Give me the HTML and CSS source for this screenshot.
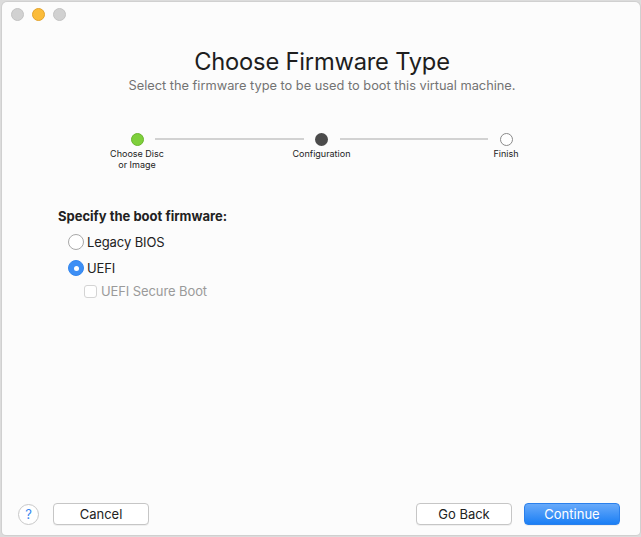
FILE: index.html
```html
<!DOCTYPE html>
<html>
<head>
<meta charset="utf-8">
<link rel="stylesheet" href="styles.css">
</head>
<body>
<div class="window">
  <div class="titlebar">
    <span class="light gray"></span>
    <span class="light yellow"></span>
    <span class="light gray"></span>
  </div>
  <div class="header">
    <h1 class="title">Choose Firmware Type</h1>
    <p class="subtitle">Select the firmware type to be used to boot this virtual machine.</p>
  </div>
  <div class="stepper">
    <div class="step">
      <span class="dot done"></span>
      <span class="step-label">Choose Disc<br>or Image</span>
    </div>
    <div class="line"></div>
    <div class="step">
      <span class="dot current"></span>
      <span class="step-label">Configuration</span>
    </div>
    <div class="line"></div>
    <div class="step">
      <span class="dot todo"></span>
      <span class="step-label">Finish</span>
    </div>
  </div>
  <div class="form">
    <div class="form-title">Specify the boot firmware:</div>
    <label class="option">
      <span class="radio"></span>
      <span class="opt-text">Legacy BIOS</span>
    </label>
    <label class="option">
      <span class="radio checked"></span>
      <span class="opt-text">UEFI</span>
    </label>
    <label class="option sub disabled">
      <span class="checkbox"></span>
      <span class="opt-text">UEFI Secure Boot</span>
    </label>
  </div>
  <div class="footer">
    <span class="help">?</span>
    <button class="btn cancel">Cancel</button>
    <div class="spacer"></div>
    <button class="btn">Go Back</button>
    <button class="btn primary">Continue</button>
  </div>
</div>
</body>
</html>
```
FILE: styles.css
```css
html, body {
  margin: 0;
  padding: 0;
}
body {
  width: 641px;
  height: 537px;
  background: #dcdcdc;
  font-family: "Inter", "Liberation Sans", sans-serif;
  color: #222;
  overflow: hidden;
}
.window {
  margin: 2px 0 0 2px;
  width: 638px;
  height: 533px;
  background: #fcfcfc;
  border-radius: 5px 5px 4px 4px;
  box-shadow: 0 0 0 1px #d0d0d0;
  display: flex;
  flex-direction: column;
  box-sizing: border-box;
}
.titlebar {
  display: flex;
  gap: 8px;
  padding: 6px 0 0 9px;
  height: 22px;
  box-sizing: border-box;
}
.light {
  width: 13px;
  height: 13px;
  border-radius: 50%;
  box-sizing: border-box;
}
.light.gray {
  background: #d1d1d1;
  border: 1px solid #c3c3c3;
}
.light.yellow {
  background: #fbbc3a;
  border: 1px solid #e3a32b;
}
.header {
  text-align: center;
  padding-left: 2px;
}
.title {
  margin: 23px 0 0;
  font-size: 23.7px;
  font-weight: 400;
  line-height: 30px;
  color: #1e1e1e;
  letter-spacing: -0.2px;
}
.subtitle {
  margin: 1px 0 0;
  font-size: 12.8px;
  line-height: 16px;
  color: #737373;
}
.stepper {
  display: flex;
  align-items: flex-start;
  margin: 39px 0 0 101px;
  width: 437px;
}
.step {
  width: 68px;
  display: flex;
  flex-direction: column;
  align-items: center;
  flex: none;
}
.line {
  flex: 1;
  height: 2px;
  background: #d2d2d2;
  margin: 5px -16px 0;
}
.dot {
  width: 13px;
  height: 13px;
  border-radius: 50%;
  box-sizing: border-box;
}
.dot.done {
  background: #7ed03b;
  border: 1px solid #6ab52e;
}
.dot.current {
  background: #4b4b4b;
}
.dot.todo {
  background: #fff;
  border: 1px solid #8a8a8a;
}
.step-label {
  margin-top: 2px;
  font-size: 9px;
  line-height: 11px;
  text-align: center;
  color: #222;
  white-space: nowrap;
}
.form {
  margin: 38px 0 0 56px;
  display: flex;
  flex-direction: column;
}
.form-title {
  font-size: 13px;
  font-weight: 700;
  line-height: 16px;
  margin-bottom: 5px;
  color: #222;
}
.option {
  display: flex;
  align-items: center;
  gap: 3px;
  height: 26px;
  font-size: 13px;
  letter-spacing: -0.1px;
  margin-left: 10px;
}
.option.sub {
  margin-left: 26px;
  height: 20px;
  gap: 4px;
}
.radio {
  width: 16px;
  height: 16px;
  border-radius: 50%;
  box-sizing: border-box;
  border: 1px solid #a9a9a9;
  background: #fff;
  position: relative;
}
.radio.checked {
  background: #3d8ff5;
  border-color: #3487ee;
}
.radio.checked::after {
  content: "";
  position: absolute;
  left: 5px;
  top: 5px;
  width: 5px;
  height: 5px;
  border-radius: 50%;
  background: #fff;
}
.checkbox {
  width: 13px;
  height: 13px;
  border-radius: 3px;
  box-sizing: border-box;
  border: 1px solid #d4d4d4;
  background: #fff;
}
.disabled .opt-text {
  color: #9a9a9a;
}
.footer {
  margin-top: auto;
  display: flex;
  align-items: center;
  padding: 0 20px 10px 16px;
  gap: 0;
}
.help {
  width: 21px;
  height: 21px;
  border-radius: 50%;
  box-sizing: border-box;
  border: 1px solid #c8c8c8;
  background: #fff;
  color: #3a86ef;
  font-size: 13px;
  display: flex;
  align-items: center;
  justify-content: center;
}
.btn {
  width: 96px;
  height: 22px;
  border: 1px solid #c6c6c6;
  border-radius: 4px;
  background: #fff;
  font-family: inherit;
  font-size: 13px;
  color: #222;
  padding: 0;
  box-shadow: 0 1px 0 rgba(0,0,0,0.05);
}
.cancel {
  margin-left: 14px;
}
.spacer {
  flex: 1;
}
.primary {
  margin-left: 12px;
  background: linear-gradient(#68aafa, #1b7ff5);
  border-color: #2a80ec;
  color: #fff;
}
```
